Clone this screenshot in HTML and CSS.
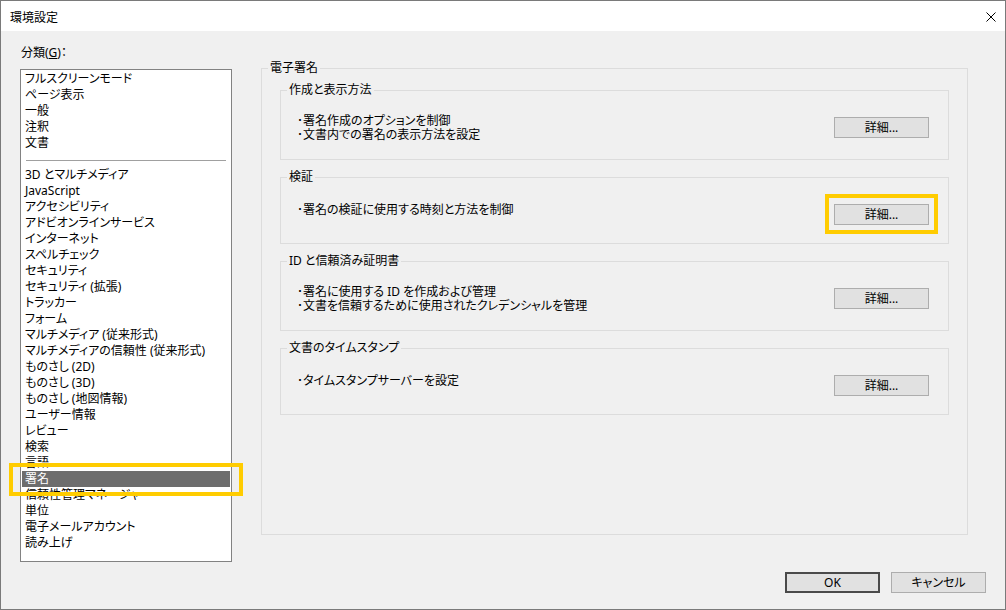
FILE: index.html
```html
<!DOCTYPE html>
<html lang="ja">

<head>
    <meta charset="UTF-8">
    <title>環境設定</title>
    <link rel="stylesheet" href="styles.css">
</head>

<body>
    <div class="window">
        <div class="titlebar">
            <span class="title">環境設定</span>
            <svg class="close" width="10" height="10" viewBox="0 0 10 10">
                <path d="M0.5 0.5L9.5 9.5M9.5 0.5L0.5 9.5" stroke="#000" stroke-width="1" fill="none" />
            </svg>
        </div>

        <div class="content">
            <div class="sidebar">
                <div class="category-label">分類(<u>G</u>)：</div>
                <ul class="category-list">
                    <li>フルスクリーンモード</li>
                    <li>ページ表示</li>
                    <li>一般</li>
                    <li>注釈</li>
                    <li>文書</li>
                    <li class="separator"></li>
                    <li>3D とマルチメディア</li>
                    <li>JavaScript</li>
                    <li>アクセシビリティ</li>
                    <li>アドビオンラインサービス</li>
                    <li>インターネット</li>
                    <li>スペルチェック</li>
                    <li>セキュリティ</li>
                    <li>セキュリティ (拡張)</li>
                    <li>トラッカー</li>
                    <li>フォーム</li>
                    <li>マルチメディア (従来形式)</li>
                    <li>マルチメディアの信頼性 (従来形式)</li>
                    <li>ものさし (2D)</li>
                    <li>ものさし (3D)</li>
                    <li>ものさし (地図情報)</li>
                    <li>ユーザー情報</li>
                    <li>レビュー</li>
                    <li>検索</li>
                    <li>言語</li>
                    <li class="selected">署名</li>
                    <li>信頼性管理マネージャ</li>
                    <li>単位</li>
                    <li>電子メールアカウント</li>
                    <li>読み上げ</li>
                </ul>
            </div>

            <div class="main">
                <fieldset class="group-outer">
                    <legend>電子署名</legend>

                    <fieldset class="group group-tall">
                        <legend>作成と表示方法</legend>
                        <div class="group-body">
                            <div class="desc">
                                <div>･署名作成のオプションを制御</div>
                                <div>･文書内での署名の表示方法を設定</div>
                            </div>
                            <button class="btn btn-detail">詳細...</button>
                        </div>
                    </fieldset>

                    <fieldset class="group">
                        <legend>検証</legend>
                        <div class="group-body">
                            <div class="desc desc-single">
                                <div>･署名の検証に使用する時刻と方法を制御</div>
                            </div>
                            <div class="highlight">
                                <button class="btn">詳細...</button>
                            </div>
                        </div>
                    </fieldset>

                    <fieldset class="group group-tall">
                        <legend>ID と信頼済み証明書</legend>
                        <div class="group-body">
                            <div class="desc">
                                <div>･署名に使用する ID を作成および管理</div>
                                <div>･文書を信頼するために使用されたクレデンシャルを管理</div>
                            </div>
                            <button class="btn btn-detail">詳細...</button>
                        </div>
                    </fieldset>

                    <fieldset class="group">
                        <legend>文書のタイムスタンプ</legend>
                        <div class="group-body">
                            <div class="desc desc-single">
                                <div>･タイムスタンプサーバーを設定</div>
                            </div>
                            <button class="btn btn-detail">詳細...</button>
                        </div>
                    </fieldset>
                </fieldset>
            </div>
        </div>

        <div class="footer">
            <button class="btn btn-default">OK</button>
            <button class="btn">キャンセル</button>
        </div>
    </div>
</body>

</html>
```

FILE: styles.css
```css
* {
    box-sizing: border-box;
}

body {
    margin: 0;
    font-family: "Noto Sans", "Noto Sans CJK JP", sans-serif;
    font-size: 12px;
    font-feature-settings: "palt";
    color: #000;
    background: #fff;
}

.window {
    width: 1006px;
    height: 610px;
    border: 1px solid #7a7a7a;
    background: #f0f0f0;
    display: flex;
    flex-direction: column;
}

.titlebar {
    height: 30px;
    flex-shrink: 0;
    background: #fff;
    display: flex;
    align-items: center;
    justify-content: space-between;
    padding: 1px 9px 0 9px;
}

.content {
    display: flex;
    align-items: flex-start;
    padding: 14px 0 0 19px;
}

/* category list */
.sidebar {
    width: 212px;
}

.category-label {
    height: 16px;
    line-height: 16px;
    margin-bottom: 8px;
    padding-left: 1px;
}

.category-list {
    list-style: none;
    margin: 0;
    padding: 1px 0 0 0;
    height: 493px;
    background: #fff;
    border: 1px solid #828282;
}

.category-list li {
    height: 16px;
    line-height: 16px;
    margin: 0 1px;
    padding-left: 3px;
    white-space: nowrap;
}

.category-list .separator {
    height: 10px;
    margin: 0 5px 6px 5px;
    padding: 0;
    border-bottom: 1px solid #a0a0a0;
}

.category-list .selected {
    position: relative;
    background: #6d6d6d;
    color: #fff;
}

.category-list .selected::after {
    content: '';
    position: absolute;
    top: -8px;
    bottom: -9px;
    left: -13px;
    right: -13px;
    border: 4px solid #ffcc00;
}

/* group boxes */
.main {
    margin-left: 29px;
    margin-top: 15px;
}

fieldset {
    margin: 0;
    min-width: 0;
    border: 1px solid #dcdcdc;
}

legend {
    margin-left: 6px;
    padding: 0 2px;
    line-height: 16px;
}

.group-outer {
    width: 707px;
    height: 475px;
    padding: 6px 0 0 0;
}

.group {
    margin: 0 18px 9px 18px;
    padding: 0;
    height: 75px;
}

.group-tall {
    height: 78px;
}

.group-body {
    display: flex;
    justify-content: space-between;
    align-items: flex-start;
    padding: 16px 19px 0 16px;
}

.desc {
    line-height: 14px;
    white-space: nowrap;
}

.desc-single {
    padding-top: 2px;
}

.btn-detail {
    margin-top: 3px;
}

.highlight {
    position: relative;
    margin-top: 3px;
    display: flex;
}

.highlight::after {
    content: '';
    position: absolute;
    top: -10px;
    bottom: -9px;
    left: -9px;
    right: -9px;
    border: 4px solid #ffcc00;
}

/* buttons */
.btn {
    width: 95px;
    height: 21px;
    padding: 0;
    border: 1px solid #adadad;
    background: #e1e1e1;
    font: inherit;
    color: #000;
    line-height: 19px;
    text-align: center;
}

.btn-default {
    border: 2px solid #4a4a4a;
    line-height: 17px;
}

.footer {
    display: flex;
    justify-content: flex-end;
    gap: 11px;
    padding: 10px 19px 0 0;
}
```
